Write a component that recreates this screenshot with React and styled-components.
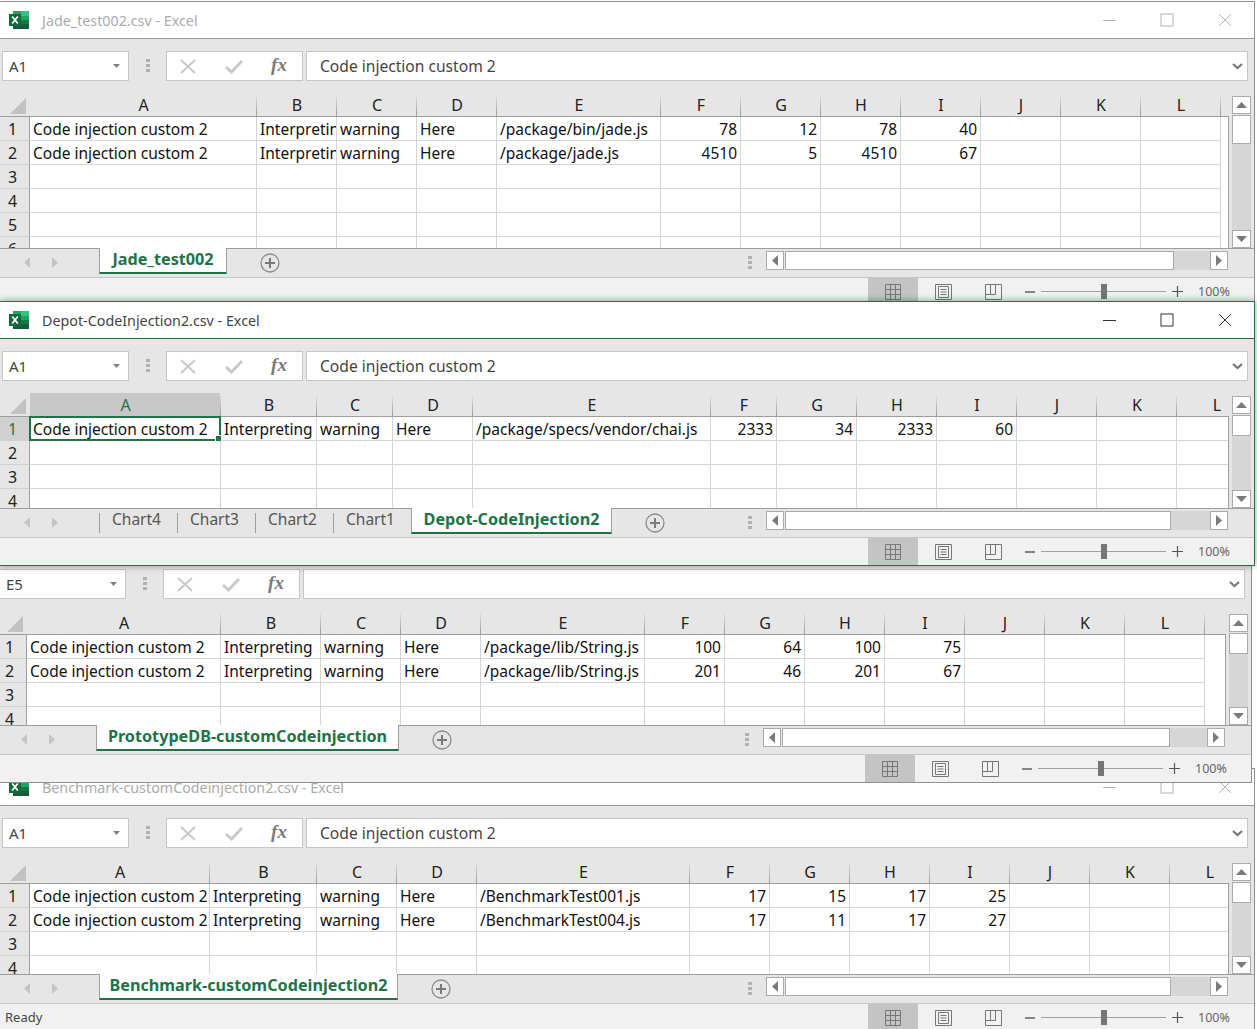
import styled, { createGlobalStyle } from "styled-components";

const GREEN = "#217346";
const UI_FONT = '"Noto Sans", "Open Sans", sans-serif';

const GlobalStyle = createGlobalStyle`
   html, body {
      margin: 0;
      background: #fff;
   }
   * {
      box-sizing: border-box;
   }
`;

const Desktop = styled.div`
   width: 1257px;
   height: 1029px;
   padding-top: 1px;
   overflow: hidden;
   display: flex;
   flex-direction: column;
   background: #fff;
   font-family: ${UI_FONT};
`;

const Window = styled.section`
   position: relative;
   flex: none;
   z-index: ${(p) => p.$layer};
   width: 1255px;
   margin-top: ${(p) => p.$overlap}px;
   margin-left: ${(p) => p.$shift}px;
   background: #e6e6e6;
   border: 1px solid ${(p) => (p.$active ? GREEN : "#8f8f8f")};
   border-left: none;
   box-shadow: ${(p) => (p.$active ? "0 0 7px rgba(0, 0, 0, 0.4)" : "none")};
`;

const TitleBar = styled.header`
   display: flex;
   align-items: center;
   height: 37px;
   padding-left: 9px;
   background: #fff;
   border-bottom: 1px solid ${(p) => (p.$active ? GREEN : "#9a9a9a")};
`;

const WindowTitle = styled.span`
   margin-left: 13px;
   font-size: 14.3px;
   color: ${(p) => (p.$active ? "#444" : "#ababab")};
`;

const Controls = styled.div`
   display: flex;
   margin-left: auto;
`;

const Control = styled.span`
   display: flex;
   align-items: center;
   justify-content: center;
   width: 58px;
   height: 36px;
   color: ${(p) => (p.$active ? "#333" : "#b4b4b4")};
`;

const FormulaRow = styled.div`
   display: flex;
   align-items: stretch;
   height: 54px;
   padding: 12px 6px 12px 2px;
`;

const NameBox = styled.div`
   display: flex;
   align-items: center;
   justify-content: space-between;
   width: 127px;
   padding: 0 8px 0 6px;
   background: #fff;
   border: 1px solid #c6c6c6;
   font-size: 15px;
   color: #444;
`;

const GripSlot = styled.div`
   display: flex;
   align-items: center;
   justify-content: center;
   width: 37px;
`;

const FormulaButtons = styled.div`
   display: flex;
   align-items: center;
   gap: 3.5px;
   width: 137px;
   background: #fff;
   border: 1px solid #c6c6c6;
`;

const FormulaButton = styled.span`
   display: flex;
   align-items: center;
   justify-content: center;
   width: 42px;
`;

const Fx = styled.span`
   margin-top: -2px;
   font-family: "Liberation Serif", serif;
   font-style: italic;
   font-weight: bold;
   font-size: 19px;
   line-height: 20px;
   color: #7a7a7a;
`;

const FormulaInput = styled.div`
   flex: 1;
   display: flex;
   align-items: center;
   justify-content: space-between;
   margin-left: 3px;
   padding: 0 4px 0 13px;
   background: #fff;
   border: 1px solid #c6c6c6;
   font-size: 15.6px;
   color: #444;
`;

const SheetArea = styled.div`
   display: flex;
`;

const Sheet = styled.div`
   width: 1229px;
   overflow: hidden;
`;

const HeaderRow = styled.div`
   display: flex;
   height: 24px;
   border-bottom: 1px solid #9e9e9e;
`;

const Corner = styled.div`
   flex: none;
   display: flex;
   align-items: flex-end;
   justify-content: flex-end;
   width: 30px;
   padding: 0 4px 2px 0;
`;

const ColHeader = styled.div`
   flex: none;
   width: ${(p) => p.$width}px;
   font-size: 16px;
   line-height: 24px;
   text-align: center;
   color: ${(p) => (p.$selected ? GREEN : "#222")};
   background-color: ${(p) => (p.$selected ? "#c8c8c8" : "transparent")};
   background-image: linear-gradient(#e6e6e6, #9a9a9a);
   background-size: 1px 100%;
   background-position: right;
   background-repeat: no-repeat;
`;

/* clip-path instead of overflow so the selection can sit on the header line */
const Rows = styled.div`
   height: ${(p) => p.$height}px;
   clip-path: inset(-1px 0 0 0);
   background: #fff;
   border-right: 1px solid #9e9e9e;
`;

const Row = styled.div`
   display: flex;
   height: 24px;
   clip-path: inset(-2px 0 -4px 0);
`;

const RowHeader = styled.div`
   flex: none;
   width: 30px;
   padding-right: 4px;
   font-size: 16px;
   line-height: 24px;
   text-align: center;
   color: ${(p) => (p.$selected ? GREEN : "#222")};
   background: ${(p) => (p.$selected ? "#d0d0d0" : "#e6e6e6")};
   border-right: 1px solid #9e9e9e;
   border-bottom: 1px solid #cfcfcf;
`;

const Cell = styled.div`
   position: relative;
   flex: none;
   width: ${(p) => p.$width}px;
   border-right: 1px solid #d4d4d4;
   border-bottom: 1px solid #d4d4d4;
`;

const CellText = styled.div`
   height: 23px;
   padding: 0 3px;
   overflow: hidden;
   white-space: nowrap;
   font-size: 15.5px;
   line-height: 24px;
   color: #111;
   text-align: ${(p) => (p.$number ? "right" : "left")};
`;

const Selection = styled.div`
   position: absolute;
   top: -1px;
   left: -1px;
   right: -1px;
   bottom: -1px;
   z-index: 1;
   border: 2px solid ${GREEN};

   &::after {
      content: "";
      position: absolute;
      right: -3px;
      bottom: -3px;
      width: 5px;
      height: 5px;
      background: ${GREEN};
      border: 1px solid #fff;
   }
`;

const VScroll = styled.div`
   display: flex;
   flex-direction: column;
   width: 19px;
   margin-left: 3px;
   padding-top: 3px;
`;

const ScrollButton = styled.div`
   flex: none;
   display: flex;
   align-items: center;
   justify-content: center;
   width: ${(p) => (p.$horizontal ? "18px" : "100%")};
   height: ${(p) => (p.$horizontal ? "100%" : "18px")};
   background: #fff;
   border: 1px solid #ababab;
`;

const VThumb = styled.div`
   flex: none;
   height: ${(p) => p.$size}px;
   margin-top: 1px;
   background: #fff;
   border: 1px solid #ababab;
`;

const ScrollTrack = styled.div`
   flex: 1;
   background: #d6d6d6;
`;

const TabBar = styled.div`
   display: flex;
   height: 29px;
   border-top: 1px solid #9e9e9e;
`;

const TabNav = styled.div`
   flex: none;
   display: flex;
   align-items: center;
   gap: 22px;
   width: 99px;
   height: 28px;
   padding: 0 0 2px 24px;
`;

const ChartTab = styled.div`
   position: relative;
   flex: none;
   width: 78px;
   padding-left: 13px;
   font-size: 15.5px;
   line-height: 20px;
   color: #555;

   &::before {
      content: "";
      position: absolute;
      left: 0;
      top: 4px;
      height: 20px;
      border-left: 1px solid #9e9e9e;
   }
`;

const ActiveTab = styled.div`
   flex: none;
   display: flex;
   justify-content: center;
   align-items: center;
   width: ${(p) => p.$width}px;
   height: 26px;
   margin-top: -1px;
   padding-bottom: 2px;
   background: #fff;
   border-left: 1px solid #9e9e9e;
   border-right: 1px solid #9e9e9e;
   border-bottom: 2px solid ${GREEN};
   font-size: 16.2px;
   font-weight: 700;
   color: ${GREEN};
   white-space: nowrap;
`;

const AddSheet = styled.span`
   display: flex;
   align-items: center;
   margin: 0 0 0 33px;
   height: 28px;
`;

const HScrollGroup = styled.div`
   display: flex;
   align-items: center;
   margin-left: auto;
   padding-right: 26px;
   height: 28px;
`;

const HScroll = styled.div`
   display: flex;
   width: 462px;
   height: 19px;
   margin: 0 0 5px 14px;
`;

const HThumb = styled.div`
   flex: none;
   width: ${(p) => p.$size}px;
   margin-left: 1px;
   background: #fff;
   border: 1px solid #ababab;
`;

const StatusBar = styled.footer`
   display: flex;
   align-items: center;
   height: 28px;
   background: #f1f1f1;
   border-top: 1px solid #c6c6c6;
`;

const StatusText = styled.span`
   margin: 0 0 2px 5px;
   font-size: 13px;
   color: #444;
`;

const ViewGroup = styled.div`
   display: flex;
   align-items: center;
   align-self: stretch;
   margin-left: auto;
   padding-right: 24px;
`;

const ViewButton = styled.span`
   display: flex;
   align-items: center;
   justify-content: center;
   width: 50px;
   align-self: stretch;
   background: ${(p) => (p.$selected ? "#c4c4c4" : "transparent")};
`;

const ZoomMark = styled.span`
   display: flex;
   margin-left: ${(p) => p.$gap}px;
`;

const Slider = styled.div`
   position: relative;
   width: 125px;
   height: 1px;
   margin-left: 6px;
   background: #a0a0a0;
`;

const SliderKnob = styled.span`
   position: absolute;
   left: 60px;
   top: -7px;
   width: 6px;
   height: 15px;
   background: #767676;
`;

const ZoomValue = styled.span`
   width: 32px;
   margin-left: 15px;
   font-size: 12.5px;
   color: #666;
   white-space: nowrap;
`;

const ExcelIcon = () => (
   <svg width="20" height="18" viewBox="0 0 20 18">
      <rect x="4" width="8" height="5" fill="#21a366" />
      <rect x="12" width="8" height="5" fill="#33c481" />
      <rect x="4" y="5" width="8" height="8" fill="#107c41" />
      <rect x="12" y="5" width="8" height="4" fill="#21a366" />
      <rect x="12" y="9" width="8" height="4" fill="#107c41" />
      <rect x="4" y="13" width="16" height="5" fill="#185c37" />
      <rect y="3" width="12" height="12" fill="#0f6b3b" />
      <path d="M3.2 5.5l5.6 7M8.8 5.5l-5.6 7" stroke="#fff" strokeWidth="1.7" />
   </svg>
);

const MinimizeIcon = () => (
   <svg width="14" height="14" viewBox="0 0 14 14">
      <path d="M1 7.5h13" stroke="currentColor" strokeWidth="1" />
   </svg>
);

const MaximizeIcon = () => (
   <svg width="14" height="14" viewBox="0 0 14 14">
      <rect x="1" y="1" width="12" height="12" fill="none" stroke="currentColor" strokeWidth="1" />
   </svg>
);

const CloseIcon = () => (
   <svg width="14" height="14" viewBox="0 0 14 14">
      <path d="M1 1l12 12M13 1L1 13" stroke="currentColor" strokeWidth="1" />
   </svg>
);

const CaretDown = () => (
   <svg width="7" height="4" viewBox="0 0 7 4">
      <path d="M0 0h7L3.5 4z" fill="#808080" />
   </svg>
);

const Chevron = () => (
   <svg width="11" height="7" viewBox="0 0 11 7">
      <path d="M1 1l4.5 4L10 1" fill="none" stroke="#777" strokeWidth="2.2" />
   </svg>
);

const Grip = () => (
   <svg width="4" height="14" viewBox="0 0 4 14">
      <path d="M0 0h4v3H0zM0 5h4v3H0zM0 10h4v3H0z" fill="#b0b0b0" />
   </svg>
);

const CancelIcon = () => (
   <svg width="16" height="15" viewBox="0 0 16 15">
      <path d="M1 1l14 13M15 1L1 14" stroke="#c8c8c8" strokeWidth="2" />
   </svg>
);

const CheckIcon = () => (
   <svg width="18" height="15" viewBox="0 0 18 15">
      <path d="M1 8l5.5 5L17 2" fill="none" stroke="#c8c8c8" strokeWidth="3" />
   </svg>
);

const CornerIcon = () => (
   <svg width="16" height="16" viewBox="0 0 16 16">
      <path d="M16 0v16H0z" fill="#c2c2c2" />
   </svg>
);

const Arrow = ({ dir, color = "#7a7a7a" }) => {
   const shapes = {
      up: "M0 6L5.5 0 11 6z",
      down: "M0 0h11L5.5 6z",
      left: "M6 0v11L0 5.5z",
      right: "M0 0v11L6 5.5z",
   };
   const wide = dir === "up" || dir === "down";
   return (
      <svg width={wide ? 11 : 6} height={wide ? 6 : 11} viewBox={wide ? "0 0 11 6" : "0 0 6 11"}>
         <path d={shapes[dir]} fill={color} />
      </svg>
   );
};

const PlusCircle = () => (
   <svg width="20" height="20" viewBox="0 0 20 20">
      <circle cx="10" cy="10" r="9" fill="none" stroke="#8a8a8a" strokeWidth="1.3" />
      <path d="M10 5v10M5 10h10" stroke="#7a7a7a" strokeWidth="2" />
   </svg>
);

const NormalViewIcon = () => (
   <svg width="17" height="16" viewBox="0 0 17 16">
      <path d="M.5.5h15v15H.5zM.5 5.5h15M.5 10.5h15M5.5.5v15M10.5.5v15" fill="none" stroke="#777" />
   </svg>
);

const PageViewIcon = () => (
   <svg width="17" height="16" viewBox="0 0 17 16">
      <path d="M.5.5h16v15H.5zM3.5 2.5h10v11h-10zM5.5 5.5h6M5.5 8h6M5.5 10.5h6" fill="none" stroke="#777" />
   </svg>
);

const BreakViewIcon = () => (
   <svg width="17" height="16" viewBox="0 0 17 16">
      <path d="M.5.5h16v15H.5zM.5 10.5h10V.5M5.5.5v10" fill="none" stroke="#777" />
   </svg>
);

const MinusMark = () => (
   <svg width="10" height="2" viewBox="0 0 10 2">
      <path d="M0 1h10" stroke="#555" strokeWidth="1.4" />
   </svg>
);

const PlusMark = () => (
   <svg width="11" height="11" viewBox="0 0 11 11">
      <path d="M0 5.5h11M5.5 0v11" stroke="#555" strokeWidth="1.2" />
   </svg>
);

const LETTERS = ["A", "B", "C", "D", "E", "F", "G", "H", "I", "J", "K", "L"];
const CODE = "Code injection custom 2";

const windows = [
   {
      id: "jade",
      title: "Jade_test002.csv - Excel",
      layer: 1,
      overlap: 0,
      shift: 0,
      name: "A1",
      formula: CODE,
      columns: [227, 80, 80, 80, 164, 80, 80, 80, 80, 80, 80, 80],
      rowsHeight: 131,
      vThumb: 29,
      hThumb: 389,
      tab: { label: "Jade_test002", width: 128 },
      data: [
         [CODE, "Interpreting", "warning", "Here", "/package/bin/jade.js", 78, 12, 78, 40],
         [CODE, "Interpreting", "warning", "Here", "/package/jade.js", 4510, 5, 4510, 67],
      ],
   },
   {
      id: "depot",
      title: "Depot-CodeInjection2.csv - Excel",
      active: true,
      layer: 3,
      overlap: -5,
      shift: 0,
      name: "A1",
      formula: CODE,
      columns: [191, 96, 76, 80, 238, 66, 80, 80, 80, 80, 80, 80],
      rowsHeight: 91,
      vThumb: 21,
      hThumb: 386,
      charts: ["Chart4", "Chart3", "Chart2", "Chart1"],
      tab: { label: "Depot-CodeInjection2", width: 201 },
      selected: true,
      data: [[CODE, "Interpreting", "warning", "Here", "/package/specs/vendor/chai.js", 2333, 34, 2333, 60]],
   },
   {
      id: "prototype",
      title: "PrototypeDB-customCodeinjection.csv - Excel",
      layer: 2,
      overlap: -47,
      shift: -3,
      name: "E5",
      formula: "",
      columns: [194, 100, 80, 80, 164, 80, 80, 80, 80, 80, 80, 80],
      rowsHeight: 90,
      vThumb: 21,
      hThumb: 388,
      tab: { label: "PrototypeDB-customCodeinjection", width: 303 },
      data: [
         [CODE, "Interpreting", "warning", "Here", "/package/lib/String.js", 100, 64, 100, 75],
         [CODE, "Interpreting", "warning", "Here", "/package/lib/String.js", 201, 46, 201, 67],
      ],
   },
   {
      id: "benchmark",
      title: "Benchmark-customCodeinjection2.csv - Excel",
      layer: 1,
      overlap: -15,
      shift: 0,
      name: "A1",
      formula: CODE,
      columns: [180, 107, 80, 80, 213, 80, 80, 80, 80, 80, 80, 80],
      rowsHeight: 90,
      vThumb: 21,
      hThumb: 386,
      tab: { label: "Benchmark-customCodeinjection2", width: 299 },
      status: "Ready",
      data: [
         [CODE, "Interpreting", "warning", "Here", "/BenchmarkTest001.js", 17, 15, 17, 25],
         [CODE, "Interpreting", "warning", "Here", "/BenchmarkTest004.js", 17, 11, 17, 27],
      ],
   },
];

const ExcelWindow = ({ win }) => (
   <Window $layer={win.layer} $overlap={win.overlap} $shift={win.shift} $active={win.active}>
      <TitleBar $active={win.active}>
         <ExcelIcon />
         <WindowTitle $active={win.active}>{win.title}</WindowTitle>
         <Controls>
            <Control $active={win.active}><MinimizeIcon /></Control>
            <Control $active={win.active}><MaximizeIcon /></Control>
            <Control $active={win.active}><CloseIcon /></Control>
         </Controls>
      </TitleBar>

      <FormulaRow>
         <NameBox>
            {win.name}
            <CaretDown />
         </NameBox>
         <GripSlot><Grip /></GripSlot>
         <FormulaButtons>
            <FormulaButton><CancelIcon /></FormulaButton>
            <FormulaButton><CheckIcon /></FormulaButton>
            <FormulaButton><Fx>fx</Fx></FormulaButton>
         </FormulaButtons>
         <FormulaInput>
            <span>{win.formula}</span>
            <Chevron />
         </FormulaInput>
      </FormulaRow>

      <SheetArea>
         <Sheet>
            <HeaderRow>
               <Corner><CornerIcon /></Corner>
               {win.columns.map((width, i) => (
                  <ColHeader key={LETTERS[i]} $width={width} $selected={win.selected && i === 0}>
                     {LETTERS[i]}
                  </ColHeader>
               ))}
            </HeaderRow>
            <Rows $height={win.rowsHeight}>
               {[1, 2, 3, 4, 5, 6].map((num, r) => (
                  <Row key={num}>
                     <RowHeader $selected={win.selected && r === 0}>{num}</RowHeader>
                     {win.columns.map((width, c) => {
                        const value = win.data[r]?.[c];
                        return (
                           <Cell key={c} $width={width}>
                              <CellText $number={typeof value === "number"}>{value}</CellText>
                              {win.selected && r === 0 && c === 0 && <Selection />}
                           </Cell>
                        );
                     })}
                  </Row>
               ))}
            </Rows>
         </Sheet>
         <VScroll>
            <ScrollButton><Arrow dir="up" /></ScrollButton>
            <VThumb $size={win.vThumb} />
            <ScrollTrack />
            <ScrollButton><Arrow dir="down" /></ScrollButton>
         </VScroll>
      </SheetArea>

      <TabBar>
         <TabNav>
            <Arrow dir="left" color="#c4c4c4" />
            <Arrow dir="right" color="#c4c4c4" />
         </TabNav>
         {win.charts?.map((chart) => (
            <ChartTab key={chart}>{chart}</ChartTab>
         ))}
         <ActiveTab $width={win.tab.width}>{win.tab.label}</ActiveTab>
         <AddSheet><PlusCircle /></AddSheet>
         <HScrollGroup>
            <Grip />
            <HScroll>
               <ScrollButton $horizontal><Arrow dir="left" /></ScrollButton>
               <HThumb $size={win.hThumb} />
               <ScrollTrack />
               <ScrollButton $horizontal><Arrow dir="right" /></ScrollButton>
            </HScroll>
         </HScrollGroup>
      </TabBar>

      <StatusBar>
         {win.status && <StatusText>{win.status}</StatusText>}
         <ViewGroup>
            <ViewButton $selected><NormalViewIcon /></ViewButton>
            <ViewButton><PageViewIcon /></ViewButton>
            <ViewButton><BreakViewIcon /></ViewButton>
            <ZoomMark $gap={7}><MinusMark /></ZoomMark>
            <Slider><SliderKnob /></Slider>
            <ZoomMark $gap={6}><PlusMark /></ZoomMark>
            <ZoomValue>100%</ZoomValue>
         </ViewGroup>
      </StatusBar>
   </Window>
);

const App = () => (
   <>
      <GlobalStyle />
      <Desktop>
         {windows.map((win) => (
            <ExcelWindow key={win.id} win={win} />
         ))}
      </Desktop>
   </>
);

export default App;
